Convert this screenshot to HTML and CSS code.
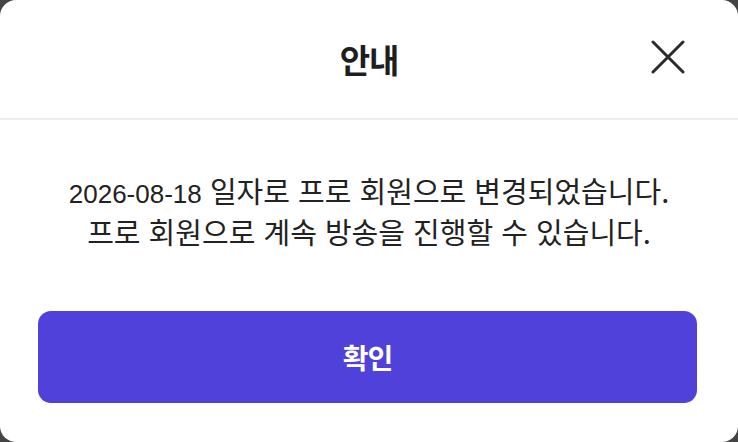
FILE: index.html
```html
<!DOCTYPE html>
<html lang="ko">
<head>
<meta charset="utf-8">
<link rel="stylesheet" href="styles.css">
</head>
<body>
<div class="modal">
  <div class="modal-header">
    <span class="spacer"></span>
    <h1 class="title">안내</h1>
    <button class="close" aria-label="닫기">
      <svg width="34" height="34" viewBox="0 0 34 34"><path d="M2 2 L32 32 M32 2 L2 32" stroke="#2b2b2b" stroke-width="3" stroke-linecap="round" fill="none"/></svg>
    </button>
  </div>
  <div class="modal-body">
    <p class="message"><span class="date">2026-08-18</span> 일자로 프로 회원으로 변경되었습니다.<br>프로 회원으로 계속 방송을 진행할 수 있습니다.</p>
  </div>
  <div class="modal-footer">
    <button class="confirm">확인</button>
  </div>
</div>
</body>
</html>
```
FILE: styles.css
```css
html, body {
  margin: 0;
  padding: 0;
  background: #444444;
}
body {
  width: 738px;
  height: 442px;
  overflow: hidden;
}
.modal {
  width: 738px;
  height: 442px;
  background: #ffffff;
  border-radius: 16px;
  display: flex;
  flex-direction: column;
  box-sizing: border-box;
  font-family: "Liberation Sans", "Noto Sans CJK KR", sans-serif;
}
.modal-header {
  height: 118px;
  border-bottom: 2px solid #ededf1;
  display: grid;
  grid-template-columns: 1fr auto 1fr;
  align-items: center;
}
.title {
  margin: 0;
  font-size: 33px;
  font-weight: 700;
  color: #1e1e1e;
  font-family: "Noto Sans CJK KR", sans-serif;
  letter-spacing: -1px;
  line-height: 40px;
}
.close {
  justify-self: end;
  margin-right: 53px;
  margin-bottom: 4px;
  width: 34px;
  height: 34px;
  padding: 0;
  border: 0;
  background: none;
  display: flex;
}
.modal-body {
  padding-top: 50px;
  height: 140px;
  box-sizing: border-box;
}
.message {
  margin: 0;
  text-align: center;
  font-family: "Noto Sans CJK KR", sans-serif;
  font-size: 29px;
  line-height: 41px;
  color: #222222;
}
.date {
  font-family: "Liberation Sans", sans-serif;
  font-size: 26px;
  line-height: 1;
}
.modal-footer {
  padding: 51px 41px 0 38px;
}
.confirm {
  width: 100%;
  height: 92px;
  border: 0;
  border-radius: 13px;
  background: #4f41da;
  color: #ffffff;
  font-family: "Noto Sans CJK KR", sans-serif;
  font-size: 28px;
  font-weight: 700;
  letter-spacing: -1px;
}
```
